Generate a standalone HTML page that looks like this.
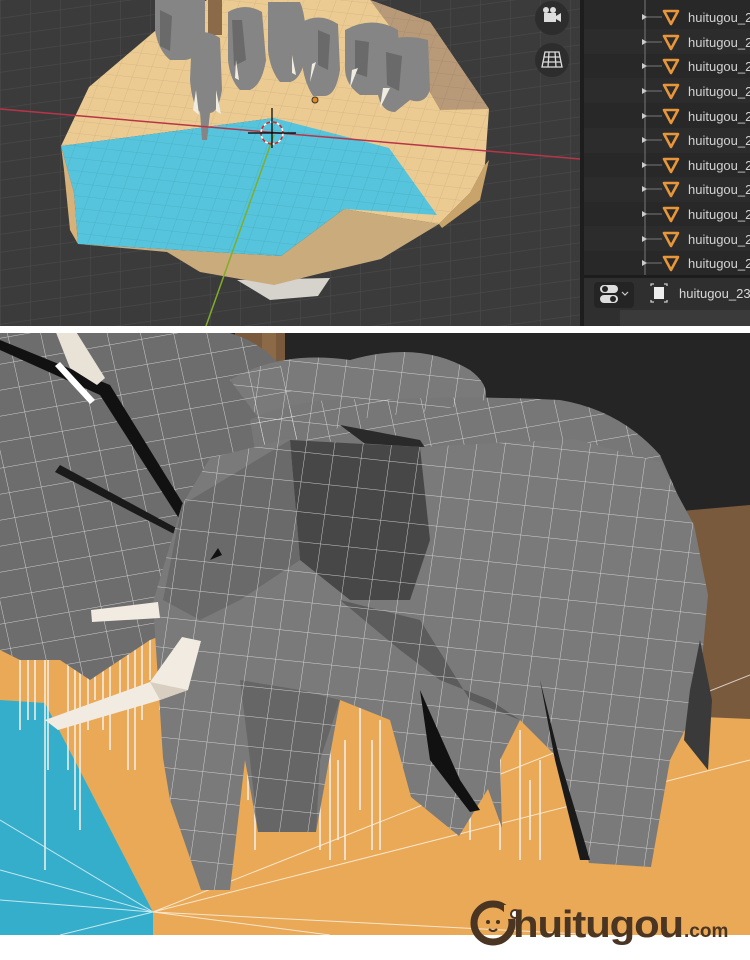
<!DOCTYPE html>
<html><head><meta charset="utf-8"><style>
html,body{margin:0;padding:0;background:#fff;width:750px;height:960px;overflow:hidden}
svg{display:block;position:absolute;left:0;top:0}
.ol{font-family:"Liberation Sans",sans-serif;}
</style></head><body>
<svg width="750" height="960" viewBox="0 0 750 960" xmlns="http://www.w3.org/2000/svg">
<defs>
<pattern id="g" width="30" height="18" patternUnits="userSpaceOnUse" patternTransform="skewY(-8)">
<path d="M0 0H30M0 0V18" stroke="#4a4a4a" stroke-width="1.2" fill="none"/></pattern>
<pattern id="tg" width="16" height="12" patternUnits="userSpaceOnUse" patternTransform="skewX(-20) skewY(6)">
<path d="M0 0H16M0 0V12" stroke="#000" stroke-opacity=".09" stroke-width="1" fill="none"/></pattern>
<pattern id="wire" width="32" height="26" patternUnits="userSpaceOnUse" patternTransform="skewY(-10) skewX(12)">
<path d="M0 0H32M0 0V26" stroke="#e0e0e0" stroke-opacity=".85" stroke-width="1" fill="none"/></pattern>
<pattern id="wire2" width="28" height="30" patternUnits="userSpaceOnUse" patternTransform="skewY(6) skewX(-8)">
<path d="M0 0H28M0 0V30" stroke="#e0e0e0" stroke-opacity=".85" stroke-width="1" fill="none"/></pattern>
<clipPath id="top"><rect x="0" y="0" width="582" height="326"/></clipPath>
<clipPath id="bot"><rect x="0" y="333" width="750" height="602"/></clipPath>
</defs>

<g clip-path="url(#top)">
<rect x="0" y="0" width="582" height="326" fill="#3b3b3b"/>
<rect x="0" y="0" width="582" height="326" fill="url(#g)"/>
<polygon points="237,280 330,278 318,296 270,300" fill="#d6d2cc"/>
<polygon points="78,244 167,252 200,272 274,285 318,274 381,259 439,224 344,209 281,256" fill="#c9ab7c"/>
<polygon points="61,146 89,87 155,31 207,0 370,0 430,22 489,109 485,165 470,193 439,224 344,209 274,118" fill="#eccb92"/>
<polygon points="370,0 430,22 489,109 440,110 400,40" fill="#b89a78"/>
<polygon points="61,146 89,87 155,31 207,0 370,0 430,22 489,109 485,165 470,193 439,224 344,209 274,118" fill="url(#tg)"/>
<polygon points="61,146 274,118 389,148 437,215 344,209 281,256 78,244 74,193" fill="#55c4dc"/>
<polygon points="61,146 274,118 389,148 437,215 344,209 281,256 78,244 74,193" fill="url(#tg)"/>
<polygon points="61,146 74,193 78,244 70,230 64,170" fill="#d6b27a"/>
<polygon points="439,224 470,193 485,165 489,160 480,200 442,228" fill="#c9a46a"/>
<rect x="208" y="0" width="14" height="35" fill="#8a6a48"/>
<g fill="#858585">
<path d="M155 0H205V40Q200 58 185 60H170Q158 50 155 30Z"/>
<path d="M228 12Q245 2 262 12L266 60Q262 85 250 90H240Q230 80 228 60Z"/>
<path d="M268 2H300Q308 20 305 60Q300 80 290 82H280Q270 70 268 50Z"/>
<path d="M302 22Q320 12 338 24L340 70Q336 95 325 96H313Q303 80 302 60Z"/>
<path d="M345 30Q372 15 398 30L400 75Q396 95 385 95H360Q346 85 345 70Z"/>
<path d="M375 45Q400 32 428 40L430 90Q425 105 410 100L395 112Q382 112 378 95Q372 70 375 45Z"/>
<path d="M192 35Q205 28 220 38L222 90Q218 113 210 113L207 140H202L200 112Q192 105 190 80Z"/>
</g>
<g fill="#6a6a6a"><path d="M232 20l10 0 4 40-12 6z M318 30l12 5-2 35-10-5z M355 40l14 2-2 35-12-4z M386 52l16 4-3 35-12-6z M160 10l12 6-2 35-10-5z"/></g>
<g fill="#f0ece0"><path d="M196 90l3 25-6-5zM216 90l5 24-5-3zM236 60l3 20-4-2zM292 55l4 20-4-2zM316 62l-6 20 2-18zM358 68l-8 20 2-18zM390 88l-10 20 3-20z"/></g>
<line x1="0" y1="109" x2="580" y2="159" stroke="#b83548" stroke-width="1.5"/>
<line x1="274" y1="135" x2="206" y2="326" stroke="#7fae2a" stroke-width="1.5"/>
<circle cx="272" cy="133" r="11" fill="none" stroke="#fff" stroke-width="1.5" stroke-dasharray="4 3"/>
<circle cx="272" cy="133" r="11" fill="none" stroke="#d22" stroke-width="1.5" stroke-dasharray="4 3" stroke-dashoffset="3.5"/>
<path d="M272 108v40M248 133h48" stroke="#000" stroke-width="1.2"/>
<circle cx="315" cy="100" r="3" fill="#e08a20" stroke="#333"/>
<circle cx="552" cy="18" r="17" fill="#2d2d2d"/>
<circle cx="552" cy="60" r="17" fill="#2d2d2d"/>
<rect x="544" y="13" width="12" height="9" fill="#ddd"/><circle cx="546" cy="10" r="3" fill="#ddd"/><circle cx="553" cy="10" r="3" fill="#ddd"/><path d="M556 16l5-3v9l-5-3z" fill="#ddd"/>
<path d="M545 52h14l3 15h-20z M549 52l-1 15 M555 52l1 15 M544 57h16 M543 62h18" stroke="#ddd" stroke-width="1.3" fill="none"/>
</g>
<rect x="580" y="0" width="170" height="326" fill="#1d1d1d"/>
<rect x="584" y="0" width="166" height="275" fill="#282828"/>
<g fill="#2c2c2c">
<rect x="584" y="29" width="166" height="25"/><rect x="584" y="78" width="166" height="25"/><rect x="584" y="128" width="166" height="25"/><rect x="584" y="177" width="166" height="25"/><rect x="584" y="226" width="166" height="25"/>
</g>
<line x1="645" y1="0" x2="645" y2="275" stroke="#777" stroke-width="1"/>
<g stroke="#777" stroke-width="1">
<path d="M645 17h17M645 42h17M645 66h17M645 91h17M645 116h17M645 140h17M645 165h17M645 189h17M645 214h17M645 239h17M645 263h17"/>
</g>
<g fill="#ccc"><path d="M642 14l5 3-5 3zM642 39l5 3-5 3zM642 63l5 3-5 3zM642 88l5 3-5 3zM642 113l5 3-5 3zM642 137l5 3-5 3zM642 162l5 3-5 3zM642 186l5 3-5 3zM642 211l5 3-5 3zM642 236l5 3-5 3zM642 260l5 3-5 3z"/></g>
<g fill="none" stroke="#e8963a" stroke-width="2.6" stroke-linejoin="round">
<path d="M664 11h14l-7 13z"/><path d="M664 36h14l-7 13z"/><path d="M664 60h14l-7 13z"/><path d="M664 85h14l-7 13z"/><path d="M664 110h14l-7 13z"/><path d="M664 134h14l-7 13z"/><path d="M664 159h14l-7 13z"/><path d="M664 183h14l-7 13z"/><path d="M664 208h14l-7 13z"/><path d="M664 233h14l-7 13z"/><path d="M664 257h14l-7 13z"/>
</g>
<g class="ol" font-size="13" fill="#d2d2d2">
<text x="688" y="22">huitugou_2</text><text x="688" y="47">huitugou_2</text><text x="688" y="71">huitugou_2</text><text x="688" y="96">huitugou_2</text><text x="688" y="121">huitugou_2</text><text x="688" y="145">huitugou_2</text><text x="688" y="170">huitugou_2</text><text x="688" y="194">huitugou_2</text><text x="688" y="219">huitugou_2</text><text x="688" y="244">huitugou_2</text><text x="688" y="268">huitugou_2</text>
</g>
<rect x="584" y="278" width="166" height="48" fill="#2f2f2f"/>
<rect x="620" y="310" width="130" height="16" fill="#3a3a3a"/>
<rect x="594" y="282" width="40" height="26" rx="4" fill="#242424"/>
<rect x="600" y="285" width="18" height="8" rx="4" fill="#ddd"/><rect x="600" y="295" width="18" height="8" rx="4" fill="#ddd"/><circle cx="605" cy="289" r="3" fill="#242424"/><circle cx="613" cy="299" r="3" fill="#242424"/>
<path d="M622 292l3 3 3-3" stroke="#ccc" fill="none" stroke-width="1.2"/>
<path d="M651 286v-2h3M664 284h3v2M667 300v2h-3M654 302h-3v-2" stroke="#ccc" fill="none" stroke-width="1.3"/>
<rect x="654" y="287" width="10" height="12" fill="#eee"/>
<text class="ol" x="679" y="298" font-size="13" fill="#d8d8d8">huitugou_23</text>

<g clip-path="url(#bot)">
<rect x="0" y="333" width="750" height="602" fill="#252525"/>
<rect x="235" y="333" width="50" height="45" fill="#7a5a3c"/>
<rect x="262" y="333" width="14" height="45" fill="#8c6a48"/>
<polygon points="0,540 750,540 750,935 0,935" fill="#e9a956"/>
<polygon points="670,512 750,505 750,719 680,716" fill="#7a5a3c"/>
<g stroke="#fff" stroke-opacity=".7" stroke-width="1">
<path d="M153 912L750 760M153 912L600 935M153 912L0 880M153 912L0 810M153 912L140 935M153 912L750 675M153 912L330 935"/>
</g>
<polygon points="0,700 45,703 153,912 153,935 0,935" fill="#35aecb"/>
<g stroke="#fff" stroke-opacity=".7"><path d="M153 912L0 820M153 912L0 870M153 912L0 900M153 912L60 935"/></g>
<g stroke="#f4f0e8" stroke-width="1.5">
<path d="M20 560v170M28 600v120M35 570v150M48 580v190M60 560v100M68 620v150M80 600v230M88 640v90M95 560v140M103 600v130M110 580v170M120 590v120M128 640v130M135 600v170M142 620v100M150 570v110M160 580v130M45 650v220M75 640v170"/>
<path d="M175 600v160M200 650v180M220 640v210M240 620v160M248 680v120M255 700v150M190 700v110M330 720v140M338 760v80M345 740v120M360 700v110M372 740v110M380 720v130M215 700v170M320 760v90"/>
<path d="M500 720v130M520 730v130M540 760v100M470 760v80M530 780v60"/>
</g>
<g>
<path d="M0 333H230Q270 345 290 380L300 450Q295 500 270 520L240 560L200 620L150 640L120 660L90 680L60 660L20 660L0 650Z" fill="#6d6d6d"/>
<path d="M230 380Q280 350 350 360Q420 340 470 370Q490 385 485 400L440 410L350 420L290 460Z" fill="#7a7a7a"/>
<path d="M250 420Q300 395 380 400Q460 395 560 400Q620 410 660 455L680 500L650 600L620 680L560 700L480 700L460 650L420 620L330 560L270 540Z" fill="#777"/>
<path d="M0 333H230Q270 345 290 380L300 450Q295 500 270 520L240 560L200 620L150 640L120 660L90 680L60 660L20 660L0 650Z" fill="url(#wire)"/>
<path d="M230 380Q280 350 350 360Q420 340 470 370Q490 385 485 400L440 410L350 420L290 460Z" fill="url(#wire2)"/>
<path d="M250 420Q300 395 380 400Q460 395 560 400Q620 410 660 455L680 500L650 600L620 680L560 700L480 700L460 650L420 620L330 560L270 540Z" fill="url(#wire)"/>
<path d="M0 340L110 385L190 515L180 520L100 395L0 350Z" fill="#111"/>
<path d="M60 362L95 400L90 404L55 366Z" fill="#fff"/>
<path d="M60 465L180 530L178 536L55 472Z" fill="#1a1a1a"/>
<path d="M340 425L420 440L440 470L400 470Z" fill="#2a2a2a"/>
<path d="M55 330L75 330L105 378L97 385L70 368Z" fill="#e9e2d6"/>
</g>
<path d="M182 505L210 458L287 439L421 447L574 439L660 462L694 525L708 595L700 680L690 720L670 760L651 867L589 863L560 760L520 720L500 760L502 828L488 789L459 836L411 797L390 720L340 700L316 832L258 832L245 760L230 890L201 890L170 800L163 758L153 602Z" fill="#7a7a7a"/>
<path d="M290 440L420 447L430 540L410 600L350 600L300 560Z" fill="#474747"/>
<path d="M182 505L290 440L300 560L240 600L200 620L163 600Z" fill="#6a6a6a"/>
<path d="M340 600L420 620L470 700L520 720L490 700L440 680L400 650Z" fill="#5c5c5c"/>
<path d="M240 680L300 690L340 700L320 760L316 832L258 832L250 760Z" fill="#666"/>
<path d="M182 505L210 458L287 439L421 447L574 439L660 462L694 525L708 595L700 680L690 720L670 760L651 867L589 863L560 760L520 720L500 760L502 828L488 789L459 836L411 797L390 720L340 700L316 832L258 832L245 760L230 890L201 890L170 800L163 758L153 602Z" fill="url(#wire2)"/>
<path d="M420 690L460 780L480 810L470 812L430 760Z" fill="#111"/>
<path d="M540 680L560 760L590 860L580 860L555 760Z" fill="#1a1a1a"/>
<path d="M700 640L712 700L708 770L684 740L690 690Z" fill="#3a3a3a"/>
<path d="M210 560L222 555L218 548Z" fill="#111"/>
<path d="M91 610L158 602L160 618L92 622Z" fill="#f1ebe1"/>
<path d="M182 637L201 641L188 690L160 700L58 730L45 720L150 682Z" fill="#f1ebe1"/>
<path d="M150 682L188 690L160 700Z" fill="#d9cfc0"/>
</g>
<g font-family="Liberation Sans,sans-serif" font-weight="bold">
<circle cx="493" cy="923" r="19" fill="none" stroke="#4a3422" stroke-width="7"/>
<rect x="504" y="905" width="14" height="14" fill="#e9a956"/>
<circle cx="515" cy="914" r="4" fill="#fff" stroke="#4a3422" stroke-width="2"/>
<circle cx="488" cy="922" r="2" fill="#4a3422"/><circle cx="498" cy="922" r="2" fill="#4a3422"/>
<path d="M489 929q4 4 8 0" stroke="#4a3422" stroke-width="2" fill="none"/>
<text x="513" y="937" font-size="38" fill="#4a3422" letter-spacing="-1" textLength="170" lengthAdjust="spacingAndGlyphs">huitugou</text>
<text x="684" y="937" font-size="19" fill="#4a3422">.com</text>
</g>
</svg>
</body></html>
